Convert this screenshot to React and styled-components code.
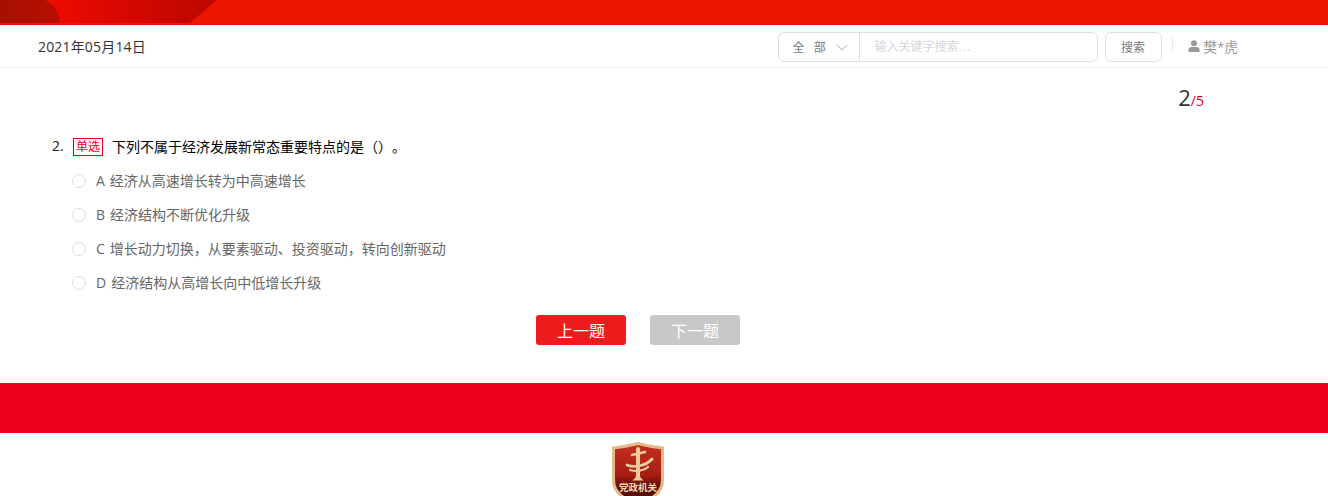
import React from "react";
import styled, { createGlobalStyle } from "styled-components";

const Global = createGlobalStyle`
  html, body { margin: 0; padding: 0; background: #fff; }
  body {
    font-family: "Open Sans", "Noto Sans CJK SC", sans-serif;
    overflow: hidden;
    text-spacing-trim: space-all;
  }
  * { box-sizing: border-box; }
`;

const Page = styled.div`
  width: 1328px;
  height: 496px;
  overflow: hidden;
  display: flex;
  flex-direction: column;
`;

const Banner = styled.div`
  height: 25px;
  flex: none;
  background: #eb1700;
  line-height: 0;
`;

const Header = styled.header`
  height: 43px;
  flex: none;
  display: flex;
  align-items: flex-start;
  padding: 7px 90px 0 38px;
  border-bottom: 1px solid #eceef2;
`;

const DateText = styled.div`
  font-size: 14px;
  line-height: 30px;
  letter-spacing: 0.17px;
  color: #333;
  margin-right: auto;
`;

const SearchBox = styled.div`
  width: 320px;
  height: 30px;
  border: 1px solid #dcdee6;
  border-radius: 6px;
  display: flex;
  align-items: stretch;
  margin-right: 7px;
`;

const Scope = styled.div`
  width: 81px;
  flex: none;
  border-right: 1px solid #dcdee6;
  display: flex;
  align-items: center;
  padding-left: 14px;
  gap: 10px;
  font-size: 12px;
  color: #777;
  word-spacing: 6px;
`;

const Keyword = styled.div`
  flex: 1;
  padding-left: 15px;
  font-size: 12px;
  line-height: 28px;
  color: #d4d6dc;
`;

const Dots = styled.span`
  letter-spacing: 1px;
`;

const SearchButton = styled.button`
  width: 57px;
  height: 30px;
  padding: 0;
  background: #fff;
  border: 1px solid #dcdee6;
  border-radius: 6px;
  font: inherit;
  font-size: 12px;
  color: #777;
  margin-right: 10px;
`;

const Divider = styled.span`
  width: 1px;
  height: 13px;
  margin: 6px 15px 0 0;
  background: #e8e9ee;
`;

const User = styled.div`
  display: flex;
  align-items: center;
  height: 28px;
  gap: 4px;
  font-size: 13.5px;
  color: #999;
`;

const Main = styled.main`
  height: 315px;
  flex: none;
  padding: 0 0 0 52px;
  display: flex;
  flex-direction: column;
`;

const Progress = styled.div`
  height: 60px;
  padding: 15px 124px 0 0;
  text-align: right;
  color: #e60012;
  font-size: 14px;
  line-height: 28px;
`;

const Current = styled.span`
  font-size: 22px;
  color: #333;
`;

const Question = styled.div`
  display: flex;
  align-items: center;
  height: 35px;
  font-size: 14px;
  color: #000;
`;

const Num = styled.span`
  width: 21px;
  font-size: 14px;
  font-weight: 500;
  color: #222;
`;

const Tag = styled.span`
  width: 30px;
  height: 18px;
  margin: 2px 9px 0 0;
  border: 1px solid #e60012;
  color: #e60012;
  font-size: 12px;
  line-height: 16px;
  text-align: center;
`;

const Options = styled.div`
  display: flex;
  flex-direction: column;
  padding-left: 20px;
`;

const Option = styled.label`
  height: 34px;
  display: flex;
  align-items: center;
  font-size: 14px;
  color: #666;
`;

const Radio = styled.span`
  width: 14px;
  height: 14px;
  border: 1px solid #dcdee6;
  border-radius: 50%;
  margin: 2px 10px 0 0;
  flex: none;
`;

const Letter = styled.span`
  font-size: 14px;
  margin-right: 5px;
`;

const Buttons = styled.div`
  display: flex;
  gap: 24px;
  margin: 16px 0 0 484px;
`;

const NavButton = styled.button`
  width: 90px;
  height: 30px;
  padding: 0;
  border: 0;
  border-radius: 3px;
  color: #fff;
  font: inherit;
  font-size: 16px;
  background: ${p => (p.$disabled ? "#c8c8c8" : "#ed1b1b")};
`;

const Band = styled.div`
  height: 50px;
  flex: none;
  background: #eb001c;
`;

const Footer = styled.footer`
  flex: 1;
  display: flex;
  justify-content: center;
  padding: 9px 52px 0 0;
`;

const BadgeText = styled.text`
  font-family: "Noto Sans CJK SC", sans-serif;
  font-size: 9.5px;
  font-weight: 700;
  fill: #f3d9b0;
`;

const BannerArt = () => (
  <svg width="1328" height="25" viewBox="0 0 1328 25">
    <defs>
      <linearGradient id="ba" x1="0" x2="1">
        <stop offset="0" stopColor="#f00a00" />
        <stop offset="0.45" stopColor="#d60800" />
        <stop offset="1" stopColor="#bc0600" />
      </linearGradient>
      <linearGradient id="bb" x1="0" x2="1">
        <stop offset="0" stopColor="#a61000" />
        <stop offset="1" stopColor="#b80e00" />
      </linearGradient>
    </defs>
    <path d="M50 0H217L190 23H50Z" fill="url(#ba)" />
    <path d="M0 0H46C56 6 60 15 60 23H0Z" fill="url(#bb)" />
  </svg>
);

const Chevron = () => (
  <svg width="12" height="7" viewBox="0 0 12 7" fill="none" stroke="#c5c9d2" strokeWidth="1.2">
    <path d="M1 1l5 5 5-5" />
  </svg>
);

const UserIcon = () => (
  <svg width="12" height="12" viewBox="0 0 12 12" fill="#999">
    <circle cx="6" cy="3.2" r="3" />
    <path d="M0.5 12V9.6C0.5 8 2 7 3.5 7h5c1.5 0 3 1 3 2.6V12Z" />
  </svg>
);

const Badge = () => (
  <svg width="52" height="54" viewBox="0 0 52 54">
    <defs>
      <linearGradient id="sh" x1="0" x2="0" y1="0" y2="1">
        <stop offset="0" stopColor="#c4311f" />
        <stop offset="0.58" stopColor="#a51d12" />
        <stop offset="0.72" stopColor="#6f120c" />
        <stop offset="1" stopColor="#4a0b07" />
      </linearGradient>
    </defs>
    <path d="M1.5 6C10 5 18 3.5 26 1.5C34 3.5 42 5 50.5 6V38C50.5 47 45 53 38 57H14C7 53 1.5 47 1.5 38Z" fill="url(#sh)" stroke="#e2bb8b" strokeWidth="3" />
    <g fill="none" stroke="#eccb9c" strokeLinecap="round">
      <path d="M26 7V34" strokeWidth="4" />
      <path d="M20 13L33 10" strokeWidth="2.6" />
      <path d="M15 23C22 26 34 24 40 17" strokeWidth="2.8" />
      <path d="M18 28C24 30 32 29 36 25" strokeWidth="2.2" />
    </g>
    <path d="M20 38.5C24 36.5 24.5 33 24.5 30H27.5C27.5 33 28 36.5 32 38.5Z" fill="#eccb9c" />
    <BadgeText x="26" y="49" textAnchor="middle">党政机关</BadgeText>
  </svg>
);

const options = [
  ["A", "经济从高速增长转为中高速增长"],
  ["B", "经济结构不断优化升级"],
  ["C", "增长动力切换，从要素驱动、投资驱动，转向创新驱动"],
  ["D", "经济结构从高增长向中低增长升级"],
];

export default function App() {
  return (
    <Page>
      <Global />
      <Banner><BannerArt /></Banner>
      <Header>
        <DateText>2021年05月14日</DateText>
        <SearchBox>
          <Scope>全 部<Chevron /></Scope>
          <Keyword>输入关键字搜索<Dots>...</Dots></Keyword>
        </SearchBox>
        <SearchButton>搜索</SearchButton>
        <Divider />
        <User><UserIcon />樊*虎</User>
      </Header>
      <Main>
        <Progress><Current>2</Current>/5</Progress>
        <Question>
          <Num>2.</Num>
          <Tag>单选</Tag>
          下列不属于经济发展新常态重要特点的是（）。
        </Question>
        <Options>
          {options.map(([l, t]) => (
            <Option key={l}>
              <Radio />
              <Letter>{l}</Letter>
              {t}
            </Option>
          ))}
        </Options>
        <Buttons>
          <NavButton>上一题</NavButton>
          <NavButton $disabled>下一题</NavButton>
        </Buttons>
      </Main>
      <Band />
      <Footer><Badge /></Footer>
    </Page>
  );
}
